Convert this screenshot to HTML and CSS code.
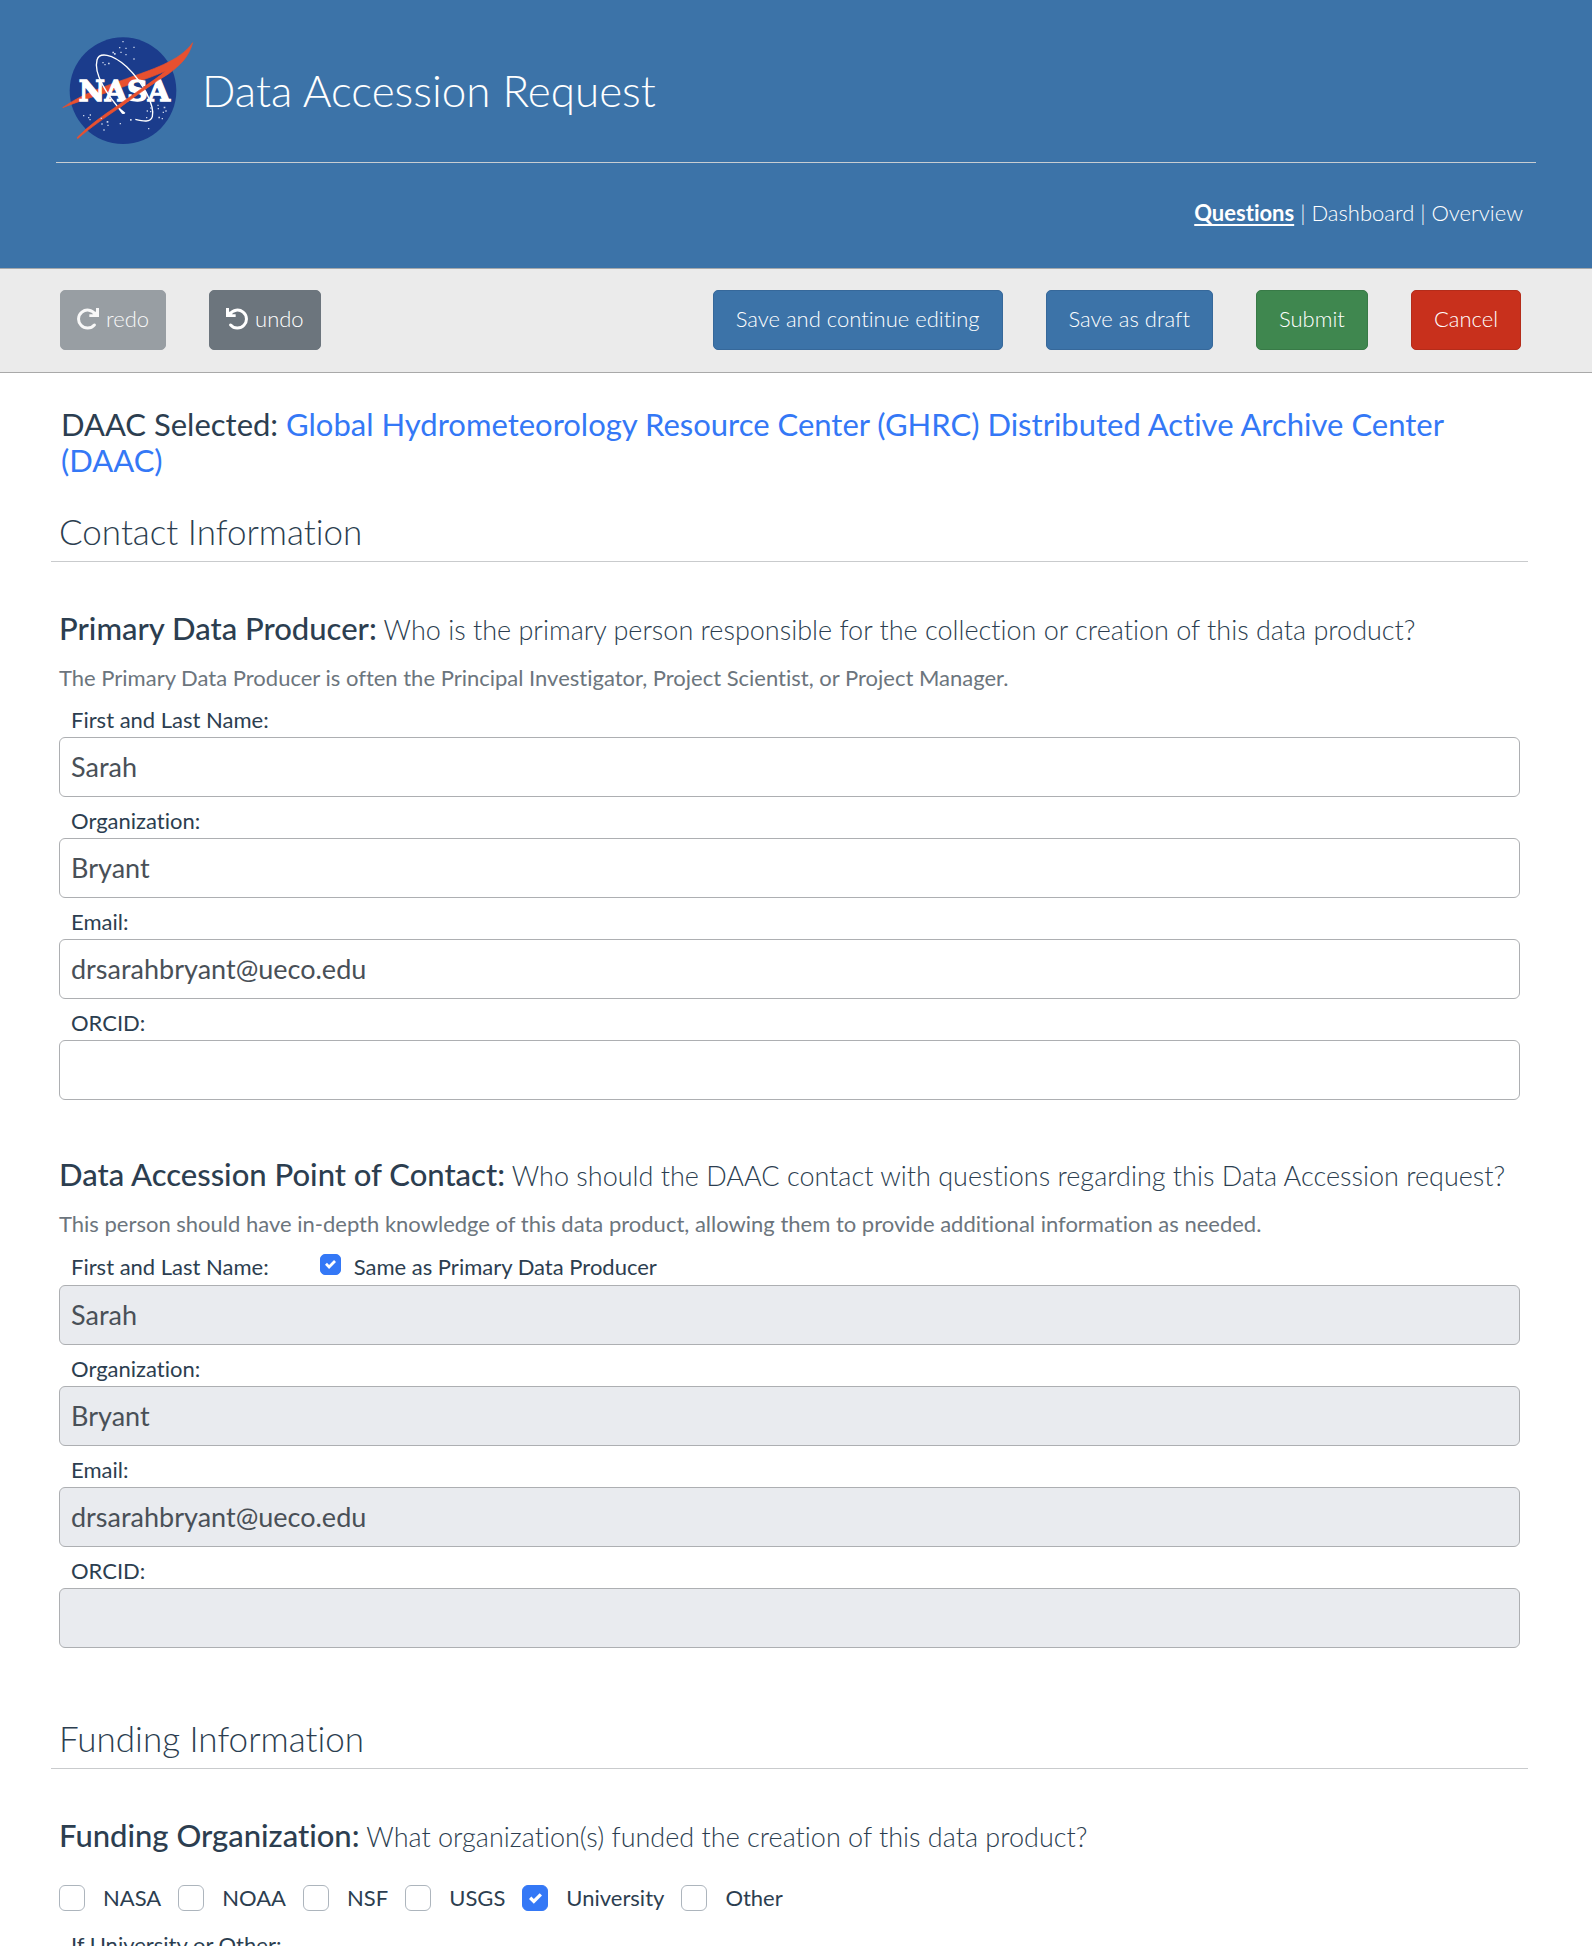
FILE: index.html
```html
<!DOCTYPE html>
<html lang="en">
<head>
<meta charset="utf-8">
<meta name="viewport" content="width=device-width, initial-scale=1">
<title>Data Accession Request</title>
<link rel="stylesheet" href="styles.css">
</head>
<body>
<header class="site-header">
  <div class="brand">
    <svg class="logo" viewBox="66 48 396 324" role="img" aria-label="NASA">
      <circle cx="249" cy="212" r="160" fill="#1b3c8c"/>
      <path d="M68 263C120 225 190 200 260 176C330 150 420 124 458 68C446 112 420 136 385 162C340 190 300 216 240 262C290 214 340 186 378 153C320 178 260 196 200 218C150 232 110 247 68 263Z" fill="#e8502f" stroke="#e8502f" stroke-width="2"/>
      <path d="M248 277C200 225 160 160 171 120C178 96 215 100 260 140C312 190 345 260 337 290C332 308 310 304 286 298" fill="none" stroke="#fff" stroke-width="4"/>
      <path d="M228 257L238 263L256 278Q254 284 246 281Z" fill="#fff"/>
      <text class="logo-text" x="253" y="242" text-anchor="middle">NASA</text>
      <path d="M385 160C340 190 290 226 240 262C190 296 150 324 113 356Q111 354 112 352C150 314 190 286 230 259C280 222 335 186 378 153Z" fill="#e8502f" stroke="#e8502f" stroke-width="2"/>
      <g fill="#c9d3ea">
        <path d="M247 63h4v4h-4zM237 81h4v4h-4zM256 83h4v4h-4zM280 80h4v4h-4zM217 95h5v5h-5zM222 99h5v5h-5zM241 95h4v4h-4zM256 102h4v4h-4zM280 115h4v4h-4zM187 126h4v4h-4zM193 132h4v4h-4zM204 128h5v5h-5z"/>
        <path d="M129 285h4v4h-4zM149 283h4v4h-4zM144 291h4v4h-4zM148 297h4v4h-4zM182 293h4v4h-4zM200 303h5v5h-5zM184 310h4v4h-4zM202 314h4v4h-4zM190 328h4v4h-4zM239 309h4v4h-4zM270 297h5v5h-5zM324 324h4v4h-4z"/>
        <path d="M352 254h4v4h-4zM371 260h5v5h-5zM376 271h4v4h-4zM368 275h4v4h-4zM353 264h4v4h-4zM331 262h4v4h-4zM320 271h4v4h-4zM355 290h5v5h-5zM365 294h4v4h-4zM318 291h4v4h-4zM330 273h4v4h-4z"/>
      </g>
    </svg>
    <h1 class="title">Data Accession Request</h1>
  </div>
  <nav class="nav">
    <a class="current" href="#questions">Questions</a> | <a href="#dashboard">Dashboard</a> | <a href="#overview">Overview</a>
  </nav>
</header>

<div class="toolbar">
  <div class="group">
    <button class="btn history" type="button" disabled>
      <svg class="icon" viewBox="0 0 66 66" aria-hidden="true"><path d="M52 51A27 27 0 1 1 54 18" fill="none" stroke="currentColor" stroke-width="9" stroke-linecap="round"/><path d="M66 0V27H37V19H48L57 10V0Z" fill="currentColor"/></svg>
      <span>redo</span>
    </button>
    <button class="btn history" type="button">
      <svg class="icon" viewBox="0 0 66 66" aria-hidden="true"><path d="M14 51A27 27 0 1 0 12 18" fill="none" stroke="currentColor" stroke-width="9" stroke-linecap="round"/><path d="M0 0V27H29V19H18L9 10V0Z" fill="currentColor"/></svg>
      <span>undo</span>
    </button>
  </div>
  <div class="group">
    <button class="btn primary" type="button">Save and continue editing</button>
    <button class="btn primary" type="button">Save as draft</button>
    <button class="btn success" type="submit" form="request">Submit</button>
    <button class="btn danger" type="button">Cancel</button>
  </div>
</div>

<main class="main">
  <p class="daac">DAAC Selected: <a href="#daac">Global Hydrometeorology Resource Center (GHRC) Distributed Active Archive Center (DAAC)</a></p>

  <form id="request">
    <section class="section">
      <h2 class="section-title">Contact Information</h2>

      <div class="question">
        <h3 class="prompt"><strong>Primary Data Producer:</strong> Who is the primary person responsible for the collection or creation of this data product?</h3>
        <p class="help">The Primary Data Producer is often the Principal Investigator, Project Scientist, or Project Manager.</p>
        <div class="fields">
          <div class="field"><label for="p-name">First and Last Name:</label><input id="p-name" type="text" value="Sarah"></div>
          <div class="field"><label for="p-org">Organization:</label><input id="p-org" type="text" value="Bryant"></div>
          <div class="field"><label for="p-email">Email:</label><input id="p-email" type="email" value="drsarahbryant@ueco.edu"></div>
          <div class="field"><label for="p-orcid">ORCID:</label><input id="p-orcid" type="text"></div>
        </div>
      </div>

      <div class="question">
        <h3 class="prompt"><strong>Data Accession Point of Contact:</strong> Who should the DAAC contact with questions regarding this Data Accession request?</h3>
        <p class="help">This person should have in-depth knowledge of this data product, allowing them to provide additional information as needed.</p>
        <div class="fields">
          <div class="field">
            <div class="label-row">
              <label for="c-name">First and Last Name:</label>
              <span class="same"><input class="check small" id="same" type="checkbox" checked><label for="same">Same as Primary Data Producer</label></span>
            </div>
            <input id="c-name" type="text" value="Sarah" disabled>
          </div>
          <div class="field"><label for="c-org">Organization:</label><input id="c-org" type="text" value="Bryant" disabled></div>
          <div class="field"><label for="c-email">Email:</label><input id="c-email" type="email" value="drsarahbryant@ueco.edu" disabled></div>
          <div class="field"><label for="c-orcid">ORCID:</label><input id="c-orcid" type="text" disabled></div>
        </div>
      </div>
    </section>

    <section class="section">
      <h2 class="section-title">Funding Information</h2>
      <div class="question">
        <h3 class="prompt"><strong>Funding Organization:</strong> What organization(s) funded the creation of this data product?</h3>
        <div class="options">
          <label class="option"><input class="check" type="checkbox">NASA</label>
          <label class="option"><input class="check" type="checkbox">NOAA</label>
          <label class="option"><input class="check" type="checkbox">NSF</label>
          <label class="option"><input class="check" type="checkbox">USGS</label>
          <label class="option"><input class="check" type="checkbox" checked>University</label>
          <label class="option"><input class="check" type="checkbox">Other</label>
        </div>
        <p class="other-label">If University or Other:</p>
      </div>
    </section>
  </form>
</main>
</body>
</html>
```
FILE: styles.css
```css
* {
  box-sizing: border-box;
}

body {
  margin: 0;
  background: #fff;
  color: #2c3e50;
  font-family: Lato, "Open Sans", sans-serif;
  font-size: 22px;
  font-weight: 400;
  font-variant-ligatures: none;
  line-height: 26px;
}

h1, h2, h3, p {
  margin: 0;
}

a {
  color: inherit;
  text-decoration: none;
}

/* Header */
.site-header {
  padding: 36px 56px 42px;
  background: #3c73a8;
  color: #fff;
}

.brand {
  display: flex;
  align-items: center;
  gap: 8px;
  padding: 0 6px 18px;
  border-bottom: 1px solid #c8cdd2;
}

.logo {
  width: 132px;
  height: 108px;
}

.logo-text {
  fill: #fff;
  stroke: #fff;
  stroke-width: 4px;
  font-family: "DejaVu Serif", serif;
  font-size: 86px;
  font-weight: 700;
}

.title {
  font-size: 44px;
  font-weight: 300;
  line-height: 52px;
}

.nav {
  padding: 37px 13px 0;
  font-weight: 300;
  text-align: right;
}

.nav .current {
  font-weight: 700;
  text-decoration: underline;
  text-decoration-thickness: 2px;
  text-underline-offset: 3px;
}

/* Toolbar */
.toolbar {
  display: flex;
  justify-content: space-between;
  padding: 21px 71px 22px 60px;
  border-top: 1px solid #a5a8ab;
  border-bottom: 1px solid #a9a9a9;
  background: #ebebeb;
}

.group {
  display: flex;
  gap: 43px;
}

.btn {
  display: flex;
  align-items: center;
  gap: 7px;
  height: 60px;
  padding: 0 22px 2px;
  border: 1px solid #36689a;
  border-radius: 5px;
  color: #fff;
  font: inherit;
  font-weight: 300;
}

.btn.history {
  padding: 0 16px 2px;
  border-color: #6c757d;
  background: #6c757d;
}

.btn.history:disabled {
  opacity: 0.65;
}

.btn.primary {
  background: #3c73a8;
}

.btn.success {
  border-color: #387a47;
  background: #3f874f;
}

.btn.danger {
  border-color: #b42c1a;
  background: #c8301c;
}

.icon {
  width: 22px;
  height: 22px;
}

/* Form */
.main {
  padding: 33px 72px 0 59px;
}

.daac {
  padding: 0 2px;
  font-size: 31px;
  line-height: 36px;
}

.daac a {
  color: #3478f6;
}

.section {
  margin-top: 33px;
}

.section + .section {
  margin-top: 70px;
}

.section-title {
  margin: 0 -8px;
  padding: 0 8px 10px;
  border-bottom: 1px solid #c9cbcd;
  font-size: 35px;
  font-weight: 300;
  line-height: 40px;
}

.question {
  margin-top: 50px;
}

.question + .question {
  margin-top: 58px;
}

.prompt {
  font-size: 27px;
  font-weight: 300;
  line-height: 36px;
}

.prompt strong {
  font-size: 31px;
  font-weight: 500;
  line-height: 30px;
}

.help {
  margin-top: 17px;
  color: #6c757d;
}

.fields {
  display: flex;
  flex-direction: column;
  gap: 11px;
  margin-top: 16px;
}

.field {
  display: flex;
  flex-direction: column;
  gap: 4px;
}

.field > label,
.label-row,
.other-label {
  padding: 0 12px;
}

.label-row {
  display: flex;
  align-items: center;
  gap: 51px;
  min-height: 28px;
}

.same {
  display: flex;
  align-items: flex-start;
  gap: 13px;
}

.field > input {
  width: 100%;
  height: 60px;
  padding: 0 11px 2px;
  border: 1px solid #adafb2;
  border-radius: 6px;
  background: #fff;
  color: #495057;
  font: inherit;
  font-size: 27px;
}

.field > input:disabled {
  background: #e9ebef;
}

.check {
  flex: none;
  width: 26px;
  height: 26px;
  margin: 0;
  border: 1px solid #adb5bd;
  border-radius: 6px;
  appearance: none;
  background: #fff;
}

.check:checked {
  border-color: #3478f6;
  background: #3478f6 url("data:image/svg+xml,%3Csvg xmlns='http://www.w3.org/2000/svg' viewBox='0 0 8 8'%3E%3Cpath fill='%23fff' d='M6.564.75l-3.59 3.612-1.538-1.55L0 4.26l2.974 2.99L8 2.193z'/%3E%3C/svg%3E") center / 13px no-repeat;
}

.check.small {
  width: 21px;
  height: 21px;
  border-radius: 5px;
  background-size: 11px;
}

.options {
  display: flex;
  flex-wrap: wrap;
  gap: 17px;
  margin-top: 30px;
}

.option {
  display: flex;
  align-items: center;
  gap: 18px;
}

.other-label {
  margin-top: 21px;
}
```
